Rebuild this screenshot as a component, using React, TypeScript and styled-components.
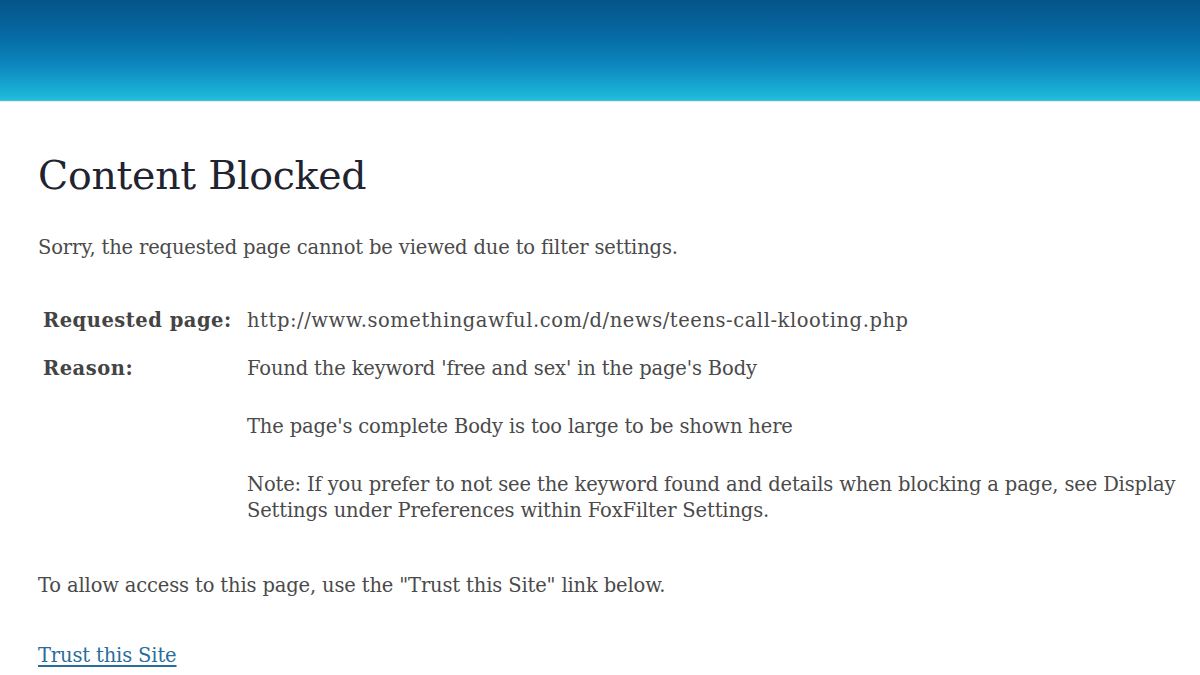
import React from "react";
import styled, { createGlobalStyle } from "styled-components";

const GlobalStyle = createGlobalStyle`
  html, body { margin: 0; padding: 0; background: #ffffff; }
  body { font-family: "DejaVu Serif", "Liberation Serif", serif; color: #4a4a4a; }
`;

const Header = styled.header`
  height: 100px;
  background: linear-gradient(to bottom, #05548a 0%, #066aa2 35%, #0d86bd 65%, #1cb6da 96%, #23bfde 100%);
  border-bottom: 1px solid #5ab6cc;
  box-shadow: 0 1px 0 #d9f3f9;
`;

const Main = styled.main`
  padding: 48px 0 0 38px;
`;

const Title = styled.h1`
  margin: 0;
  font-family: "DejaVu Serif", serif;
  font-weight: normal;
  font-size: 39.5px;
  line-height: 52px;
  color: #1f2430;
  letter-spacing: -0.3px;
`;

const Para = styled.p<{ $top: number }>`
  margin: ${(p) => p.$top}px 0 0 0;
  font-size: 19.5px;
  line-height: 26px;
  color: #4a4a4a;
  letter-spacing: -0.15px;
`;

const Details = styled.dl`
  margin: 47px 0 0 0;
  padding-left: 5px;
  display: grid;
  grid-template-columns: 204px 1fr;
  row-gap: 22px;
  font-size: 19.5px;
  line-height: 26px;
  letter-spacing: -0.15px;
`;

const Label = styled.dt`
  font-weight: bold;
  color: #444444;
  letter-spacing: 0.5px;
`;

const Value = styled.dd`
  margin: 0;
  color: #4a4a4a;
  display: flex;
  flex-direction: column;
  gap: 32px;
`;

const Line = styled.span<{ $wide?: boolean }>`
  letter-spacing: ${(p) => (p.$wide ? "0.55px" : "-0.15px")};
`;

const TrustLink = styled.a`
  display: inline-block;
  color: #2a6c9c;
  text-decoration: underline;
  text-underline-offset: 3px;
  text-decoration-thickness: 2px;
  font-size: 19.5px;
  line-height: 26px;
  letter-spacing: -0.15px;
`;

const LinkRow = styled.div`
  margin-top: 44px;
`;

export default function App() {
  return (
    <>
      <GlobalStyle />
      <Header />
      <Main>
        <Title>Content Blocked</Title>
        <Para $top={34}>Sorry, the requested page cannot be viewed due to filter settings.</Para>
        <Details>
          <Label>Requested page:</Label>
          <Value>
            <Line $wide>http://www.somethingawful.com/d/news/teens-call-klooting.php</Line>
          </Value>
          <Label>Reason:</Label>
          <Value>
            <Line>Found the keyword 'free and sex' in the page's Body</Line>
            <Line>The page's complete Body is too large to be shown here</Line>
            <Line>
              Note: If you prefer to not see the keyword found and details when blocking a page, see Display
              Settings under Preferences within FoxFilter Settings.
            </Line>
          </Value>
        </Details>
        <Para $top={49}>To allow access to this page, use the "Trust this Site" link below.</Para>
        <LinkRow>
          <TrustLink href="#">Trust this Site</TrustLink>
        </LinkRow>
      </Main>
    </>
  );
}
